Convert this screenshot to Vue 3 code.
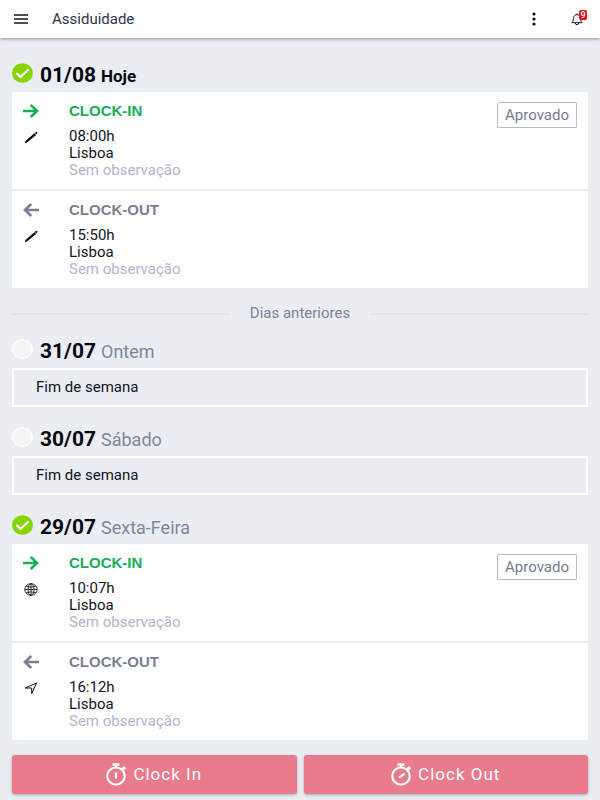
<script setup>
const days = [
  {
    date: '01/08', label: 'Hoje', today: true, done: true,
    entries: [
      { type: 'in', time: '08:00h', source: 'pen', status: 'Aprovado' },
      { type: 'out', time: '15:50h', source: 'pen' },
    ],
  },
  { date: '31/07', label: 'Ontem' },
  { date: '30/07', label: 'Sábado' },
  {
    date: '29/07', label: 'Sexta-Feira', done: true,
    entries: [
      { type: 'in', time: '10:07h', source: 'globe', status: 'Aprovado' },
      { type: 'out', time: '16:12h', source: 'location' },
    ],
  },
]
</script>

<template>
  <div class="page">
    <header class="topbar">
      <button class="icon-btn" type="button" aria-label="Menu">
        <svg width="14" height="10" viewBox="0 0 14 10"><path d="M0 1h14M0 5h14M0 9h14" stroke="#15151f" stroke-width="1.3" /></svg>
      </button>
      <h1 class="title">Assiduidade</h1>
      <button class="icon-btn more" type="button" aria-label="Mais opções">
        <svg width="4" height="14" viewBox="0 0 4 14" fill="#0a0a18"><circle cx="2" cy="2" r="1.6" /><circle cx="2" cy="7" r="1.6" /><circle cx="2" cy="12" r="1.6" /></svg>
      </button>
      <button class="icon-btn bell" type="button" aria-label="Notificações">
        <svg width="12" height="13" viewBox="0 0 12 13" fill="none" stroke="#15152a" stroke-width="1"><path d="M1 9.7C2.6 8.5 2 6 2.6 4.2 3.1 2.500 4.400 1.600 6 1.600S8.900 2.500 9.400 4.200C10 6 9.400 8.500 11 9.700ZM6 1.600V.5M4.300 10Q4.500 11.800 6 11.800T7.700 10" /></svg>
        <span class="badge">9</span>
      </button>
    </header>

    <main class="content">
      <template v-for="(day, index) in days" :key="day.date">
        <div v-if="index === 1" class="divider"><span>Dias anteriores</span></div>
        <section class="day">
          <h2 class="day-head">
            <svg v-if="day.done" class="mark" width="21" height="20" viewBox="0 0 21 20">
              <ellipse cx="10.500" cy="10" rx="10.500" ry="9.800" fill="#86d500" />
              <path d="M4.500 10l4 4 8-7.500" fill="none" stroke="#fff" stroke-width="2.300" />
            </svg>
            <svg v-else class="mark" width="21" height="20" viewBox="0 0 21 20">
              <ellipse cx="10.500" cy="10" rx="9.900" ry="9.200" fill="#f5f5f5" stroke="#fff" stroke-width="1.200" />
            </svg>
            <span class="date">{{ day.date }}</span>
            <span class="label" :class="{ today: day.today }">{{ day.label }}</span>
          </h2>

          <div v-if="day.entries" class="card">
            <article v-for="entry in day.entries" :key="entry.type" class="entry">
              <div class="icons">
                <svg class="arrow" :class="entry.type" width="16" height="14" viewBox="0 0 16 14" fill="none" stroke-width="2.500">
                  <path v-if="entry.type === 'in'" d="M0 7h14M7.700 1l6.400 6-6.400 6" />
                  <path v-else d="M16 7H2M8.300 1L1.900 7l6.400 6" />
                </svg>
                <svg v-if="entry.source === 'pen'" width="14" height="13" viewBox="0 0 14 13">
                  <path d="M.8 12.200l.7-2.200L10.300 2.300l1.800 1.800L3 11.500ZM10.700 2l1.300-1.100c.9-.6 2 .4 1.200 1.300L12.300 3.500Z" fill="#080b1e" />
                </svg>
                <svg v-else-if="entry.source === 'globe'" width="14" height="13" viewBox="0 0 14 13" fill="none" stroke="#15182a" stroke-width=".9">
                  <ellipse cx="7" cy="6.500" rx="6.200" ry="5.800" /><ellipse cx="7" cy="6.500" rx="3" ry="5.800" />
                  <path d="M7 .7v11.600M.8 6.500h12.400M2.200 3.300Q7 5 11.800 3.300M2.200 9.700Q7 8 11.800 9.700" />
                </svg>
                <svg v-else width="14" height="13" viewBox="0 0 14 13" fill="none" stroke="#080b1e" stroke-width="1">
                  <path d="M1.200 6L12.500 1 7.700 11.600V6Z" />
                </svg>
              </div>
              <div class="info">
                <h3 class="kind" :class="entry.type">{{ entry.type === 'in' ? 'CLOCK-IN' : 'CLOCK-OUT' }}</h3>
                <p>{{ entry.time }}</p>
                <p>Lisboa</p>
                <p class="note">Sem observação</p>
              </div>
              <span v-if="entry.status" class="status">{{ entry.status }}</span>
            </article>
          </div>
          <p v-else class="weekend">Fim de semana</p>
        </section>
      </template>
    </main>

    <footer class="actions">
      <button type="button" class="action">
        <svg width="21" height="23" viewBox="0 0 21 23" fill="none" stroke="#fff"><ellipse cx="10" cy="13" rx="8.800" ry="8.500" stroke-width="2.200" /><path d="M6.500 1.500h7M10 2v3M15.500 6.800L18 4.700l1.500 1.400" stroke-width="2.500" /><path d="M10 9.500v6" stroke-width="2.200" /></svg>
        <span>Clock In</span>
      </button>
      <button type="button" class="action">
        <svg width="21" height="23" viewBox="0 0 21 23" fill="none" stroke="#fff"><ellipse cx="10" cy="13" rx="8.800" ry="8.500" stroke-width="2.200" /><path d="M6.500 1.500h7M10 2v3M15.500 6.800L18 4.700l1.500 1.400" stroke-width="2.500" /><path d="M8 14.600l5.500-4" stroke-width="2.200" /></svg>
        <span>Clock Out</span>
      </button>
    </footer>
  </div>
</template>

<style>
body {
  margin: 0;
  background: #eaeef3;
}
</style>

<style scoped>
.page {
  font-family: Roboto, "Liberation Sans", sans-serif;
  font-size: 15px;
  line-height: 17px;
  color: #111426;
}
h1, h2, h3, p {
  margin: 0;
}
svg {
  display: block;
  flex: none;
}
button {
  border: 0;
  padding: 0;
  font: inherit;
  cursor: pointer;
}
.topbar {
  display: flex;
  align-items: center;
  height: 38px;
  padding: 0 14px;
  background: #fff;
  box-shadow: 0 1px 3px rgba(0, 0, 0, 0.4);
}
.icon-btn {
  position: relative;
  background: none;
}
.title {
  margin-left: 24px;
  flex: 1;
  font-size: 15px;
  font-weight: 400;
  color: #303345;
}
.more {
  margin-right: 35px;
}
.bell {
  margin-right: 3px;
}
.badge {
  position: absolute;
  top: -3px;
  right: -4px;
  width: 8px;
  height: 10px;
  border-radius: 2px;
  background: #e80c14;
  color: #fff;
  font-size: 9px;
  font-weight: 500;
  line-height: 10px;
  text-align: center;
}
.content {
  display: flex;
  flex-direction: column;
  gap: 20px;
  padding: 25px 12px 0;
}
.day-head {
  display: flex;
  align-items: baseline;
  height: 24px;
  margin-bottom: 5px;
  line-height: 24px;
}
.mark {
  align-self: flex-start;
}
.date {
  margin: 0 5px 0 7px;
  font-size: 21px;
  font-weight: 700;
  color: #05060f;
}
.label {
  font-size: 18px;
  font-weight: 400;
  color: #82859a;
}
.label.today {
  font-size: 17px;
  font-weight: 700;
  color: #05060f;
}
.card {
  background: #fff;
}
.entry {
  display: flex;
  align-items: flex-start;
  padding: 10px 11px;
}
.entry + .entry {
  border-top: 2px solid #eaeef3;
}
.icons {
  display: flex;
  flex-direction: column;
  align-items: center;
  gap: 13px;
  width: 16px;
  padding-top: 2px;
}
.arrow.in {
  stroke: #18ad58;
}
.arrow.out {
  stroke: #7b7f92;
}
.info {
  flex: 1;
  margin-left: 30px;
}
.kind {
  margin-bottom: 9px;
  font-family: "Liberation Sans", sans-serif;
  font-size: 15px;
  font-weight: 700;
}
.kind.in {
  color: #18ad58;
}
.kind.out {
  color: #7b7f92;
}
.note {
  color: #b3b5cb;
}
.status {
  padding: 4px 7px;
  border: 1px solid #b9bccb;
  border-radius: 1px;
  line-height: 16px;
  color: #777b91;
}
.divider {
  display: flex;
  align-items: center;
  gap: 20px;
  margin: -3px 0;
  color: #7f8297;
}
.divider::before,
.divider::after {
  content: "";
  flex: 1;
  height: 2px;
  background: #e2e5eb;
}
.weekend {
  padding: 9px 22px;
  border: 2px solid #fff;
}
.actions {
  display: grid;
  grid-template-columns: 1fr 1fr;
  gap: 7px;
  padding: 15px 12px 6px;
}
.action {
  display: flex;
  align-items: center;
  justify-content: center;
  gap: 6px;
  height: 39px;
  border-radius: 3px;
  background: #e87b8c;
  box-shadow: 0 1px 3px rgba(0, 0, 0, 0.3);
  color: #fff;
  font-size: 17px;
  letter-spacing: 1px;
}
</style>
